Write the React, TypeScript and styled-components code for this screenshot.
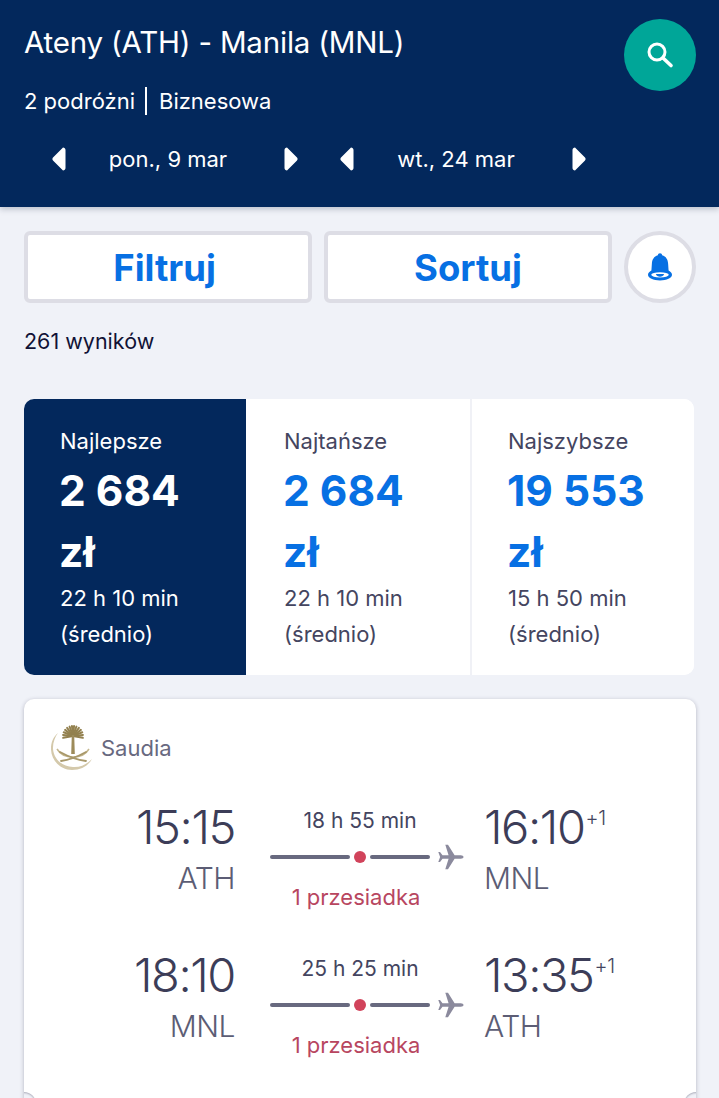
import React from 'react';
import styled, { createGlobalStyle } from 'styled-components';

const GlobalStyle = createGlobalStyle`
  html, body {
    margin: 0;
    padding: 0;
    background: #f0f2f8;
  }
  #root {
    height: 1098px;
    overflow: hidden;
  }
  * {
    box-sizing: border-box;
  }
`;

const Page = styled.div`
  width: 719px;
  font-family: Inter, 'Noto Sans', sans-serif;
  color: #161616;
`;

const Header = styled.header`
  height: 207px;
  background: #03285c;
  color: #fff;
  padding: 19px 23px 0 24px;
  box-shadow: 0 2px 6px rgba(20, 30, 60, 0.25);
  position: relative;
`;

const HeaderTop = styled.div`
  display: flex;
  justify-content: space-between;
  align-items: flex-start;
`;

const Route = styled.div`
  font-size: 29.5px;
  line-height: 46px;
  letter-spacing: -0.2px;
`;

const Meta = styled.div`
  display: flex;
  align-items: center;
  font-size: 22px;
  margin-top: 22px;
`;

const MetaPart = styled.span<{ $first?: boolean }>`
  line-height: 28px;
  padding-right: ${(p) => (p.$first ? '10px' : '0')};
  margin-right: ${(p) => (p.$first ? '12px' : '0')};
  border-right: ${(p) => (p.$first ? '2px solid #fff' : 'none')};
`;

const SearchButton = styled.div`
  width: 72px;
  height: 72px;
  border-radius: 50%;
  background: #00a698;
  display: flex;
  align-items: center;
  justify-content: center;
`;

const DateRow = styled.div`
  display: flex;
  margin-top: 30px;
  padding-left: 28px;
  gap: 42px;
`;

const DatePicker = styled.div`
  width: 246px;
  display: flex;
  align-items: center;
  justify-content: space-between;
`;

const DateLabel = styled.span`
  font-size: 22px;
  line-height: 28px;
  padding-right: 14px;
`;

const Content = styled.main`
  padding: 24px 23px 0 24px;
`;

const Actions = styled.div`
  display: flex;
  gap: 12px;
`;

const ActionButton = styled.div<{ $nudge?: number }>`
  width: 288px;
  height: 72px;
  background: #fff;
  border: 4px solid #dddde5;
  border-radius: 6px;
  color: #0770e3;
  font-size: 36.5px;
  font-weight: 700;
  padding: 1px ${(p) => p.$nudge ?? 0}px 0 0;
  display: flex;
  align-items: center;
  justify-content: center;
`;

const BellButton = styled.div`
  width: 72px;
  height: 72px;
  background: #fff;
  border: 4px solid #dddde5;
  border-radius: 50%;
  display: flex;
  align-items: center;
  justify-content: center;
`;

const Results = styled.div`
  font-size: 21.5px;
  line-height: 28px;
  margin-top: 24px;
  color: #111236;
`;

const Tabs = styled.div`
  display: grid;
  grid-template-columns: 222px 224px 224px;
  width: 670px;
  height: 276px;
  margin-top: 44px;
  background: #fff;
  border-radius: 10px;
  overflow: hidden;
`;

const Tab = styled.div<{ $active?: boolean; $divider?: boolean }>`
  padding: 25px 0 0 ${(p) => (p.$active ? '36px' : p.$divider ? '36px' : '38px')};
  background: ${(p) => (p.$active ? '#03285c' : '#fff')};
  color: ${(p) => (p.$active ? '#fff' : '#444560')};
  border-left: ${(p) => (p.$divider ? '2px solid #f0f1f6' : 'none')};
`;

const TabTitle = styled.div`
  font-size: 22px;
  line-height: 34px;
`;

const TabPrice = styled.div<{ $active?: boolean }>`
  font-size: 42.5px;
  font-weight: 700;
  line-height: 61px;
  margin-left: -1px;
  color: ${(p) => (p.$active ? '#fff' : '#0770e3')};
  margin-top: 2px;
`;

const TabTime = styled.div`
  font-size: 22px;
  line-height: 36px;
  margin-top: -2px;
`;

const Card = styled.section`
  position: relative;
  width: 672px;
  height: 440px;
  margin-top: 24px;
  background: #fff;
  border-radius: 10px;
  box-shadow: 0 1px 4px rgba(40, 40, 70, 0.3);
  padding: 26px 0 0 26px;
  overflow: hidden;
`;

const Notch = styled.span<{ $side: 'left' | 'right' }>`
  position: absolute;
  top: 393px;
  ${(p) => p.$side}: -12px;
  width: 24px;
  height: 24px;
  border-radius: 50%;
  background: #f0f2f8;
  box-shadow: inset 0 1px 2px rgba(40, 40, 70, 0.35);
`;

const Airline = styled.div`
  display: flex;
  align-items: center;
  gap: 7px;
  font-size: 22px;
  color: #68697f;
`;

const LegList = styled.div`
  display: flex;
  flex-direction: column;
  gap: 36px;
  margin-top: 28px;
`;

const Leg = styled.div`
  display: grid;
  grid-template-columns: 185px 179px auto;
  column-gap: 35px;
`;

const Times = styled.div<{ $left?: boolean }>`
  text-align: ${(p) => (p.$left ? 'right' : 'left')};
`;

const Clock = styled.div`
  font-size: 47px;
  font-weight: 300;
  line-height: 56px;
  letter-spacing: -1.4px;
  color: #3c3d58;
  white-space: nowrap;
`;

const NextDay = styled.sup`
  font-size: 20px;
  font-weight: 300;
  line-height: 0;
  vertical-align: 19px;
  margin-left: 1px;
  letter-spacing: -0.5px;
  color: #444560;
`;

const Code = styled.div`
  font-size: 30px;
  font-weight: 300;
  line-height: 40px;
  letter-spacing: -0.5px;
  margin-top: 3px;
  color: #5c5d75;
`;

const Middle = styled.div`
  display: flex;
  flex-direction: column;
  padding-top: 8px;
`;

const Duration = styled.div`
  width: 180px;
  text-align: center;
  font-size: 21px;
  line-height: 28px;
  color: #444560;
`;

const Track = styled.div`
  display: flex;
  align-items: center;
  height: 28px;
  margin-top: 8px;
  gap: 4px;
  width: 194px;
`;

const Line = styled.span<{ $width: number }>`
  width: ${(p) => p.$width}px;
  height: 4px;
  background: #68697f;
  border-radius: 2px;
`;

const Dot = styled.span`
  width: 12px;
  height: 12px;
  border-radius: 50%;
  background: #d1435b;
`;

const PlaneSlot = styled.span`
  display: flex;
  margin-left: 4px;
`;

const Stops = styled.div`
  width: 172px;
  text-align: center;
  font-size: 22px;
  line-height: 28px;
  margin-top: 12px;
  color: #b8465f;
`;

const SearchIcon = () => (
  <svg width="30" height="30" viewBox="0 0 30 30" fill="none" stroke="#fff" strokeLinecap="round">
    <circle cx="12" cy="12" r="8" strokeWidth="3" />
    <path d="M18 18l8 7.5" strokeWidth="3.6" />
  </svg>
);

const Chevron = ({ flip }: { flip?: boolean }) => (
  <svg width="14" height="24" viewBox="0 0 14 24" style={flip ? { transform: 'scaleX(-1)' } : undefined}>
    <path d="M11 .5c1.400 0 2.500 1 2.500 2.500v18c0 1.500-1.100 2.500-2.500 2.500L1 13.400c-.8-.8-.8-2 0-2.800z" fill="#fff" />
  </svg>
);

const BellIcon = () => (
  <svg width="24" height="28" viewBox="0 0 26 30" fill="#0770e3">
    <path d="M13 0c1.400 0 2.200 1 2.300 2.300C19.600 3.600 21.600 7 21.800 11.500l.5 7.300C24.600 20 26 21.500 26 23.500c0 3.500-5.800 6-13 6S0 27 0 23.500c0-2 1.400-3.500 3.700-4.700l.5-7.300C4.400 7 6.400 3.600 10.700 2.300 10.800 1 11.600 0 13 0z" />
    <ellipse cx="13" cy="23.500" rx="9.500" ry="2.800" fill="#fff" />
    <path d="M8.500 22.500h9c-.6 2-2.400 3-4.500 3s-3.900-1-4.500-3z" />
  </svg>
);

const PlaneIcon = () => (
  <svg width="26" height="26" viewBox="0 0 26 26" fill="#8b8a9d">
    <path d="M25.500 13c0-.9-1.200-1.700-2.700-1.700h-6.200L10 .8H7.300l3.300 10.500H4.500L2 8H.3l1.800 5-1.800 5H2l2.500-3.300h6.100L7.300 25.200H10l6.600-10.500h6.200c1.500 0 2.700-.8 2.700-1.700z" />
  </svg>
);

const palmFronds = [-100, -84, -68, -52, -36, -20, -6, 6, 20, 36, 52, 68, 84, 100];

const SaudiaLogo = () => (
  <svg width="44" height="46" viewBox="0 0 44 46" fill="none">
    <path
      d="M8 8C3 12 .8 18 1 24.500 1.500 36 11 45 22 45c9 0 16-4 20-11-5 5-11 8.500-19 8C12 41.500 3.500 34 3 23.500 2.800 17.500 5 12 8 8z"
      fill="#d4c9ab"
    />
    <g stroke="#93814f" strokeWidth="2" strokeLinecap="round">
      {palmFronds.map((angle) => (
        <path key={angle} d="M23 11V1" transform={`rotate(${angle} 23 11)`} />
      ))}
    </g>
    <path d="M21.800 10h2.400l.6 19h-3.600z" fill="#9d8b5a" />
    <path d="M7 24c3 5 9 8 16 8s13-3 16-8" stroke="#c4b78f" strokeWidth="1.500" />
    <path d="M11 36c8-1 16-4 25-9M36 36c-8-1-17-4-26-9" stroke="#a8986a" strokeWidth="1.800" strokeLinecap="round" />
  </svg>
);

interface LegData {
  depart: string;
  from: string;
  duration: string;
  arrive: string;
  to: string;
}

const legs: LegData[] = [
  { depart: '15:15', from: 'ATH', duration: '18 h 55 min', arrive: '16:10', to: 'MNL' },
  { depart: '18:10', from: 'MNL', duration: '25 h 25 min', arrive: '13:35', to: 'ATH' },
];

const tabs = [
  { title: 'Najlepsze', price: '2 684', time: '22 h 10 min', active: true },
  { title: 'Najtańsze', price: '2 684', time: '22 h 10 min' },
  { title: 'Najszybsze', price: '19 553', time: '15 h 50 min', divider: true },
];

export default function App() {
  return (
    <Page>
      <GlobalStyle />
      <Header>
        <HeaderTop>
          <div>
            <Route>Ateny (ATH) - Manila (MNL)</Route>
            <Meta>
              <MetaPart $first>2 podróżni</MetaPart>
              <MetaPart>Biznesowa</MetaPart>
            </Meta>
          </div>
          <SearchButton>
            <SearchIcon />
          </SearchButton>
        </HeaderTop>
        <DateRow>
          <DatePicker>
            <Chevron />
            <DateLabel>pon., 9 mar</DateLabel>
            <Chevron flip />
          </DatePicker>
          <DatePicker>
            <Chevron />
            <DateLabel>wt., 24 mar</DateLabel>
            <Chevron flip />
          </DatePicker>
        </DateRow>
      </Header>
      <Content>
        <Actions>
          <ActionButton $nudge={7}>Filtruj</ActionButton>
          <ActionButton>Sortuj</ActionButton>
          <BellButton>
            <BellIcon />
          </BellButton>
        </Actions>
        <Results>261 wyników</Results>
        <Tabs>
          {tabs.map((tab) => (
            <Tab key={tab.title} $active={tab.active} $divider={tab.divider}>
              <TabTitle>{tab.title}</TabTitle>
              <TabPrice $active={tab.active}>
                {tab.price}
                <br />
                zł
              </TabPrice>
              <TabTime>
                {tab.time}
                <br />
                (średnio)
              </TabTime>
            </Tab>
          ))}
        </Tabs>
        <Card>
          <Notch $side="left" />
          <Notch $side="right" />
          <Airline>
            <SaudiaLogo />
            Saudia
          </Airline>
          <LegList>
            {legs.map((leg) => (
              <Leg key={leg.depart}>
                <Times $left>
                  <Clock>{leg.depart}</Clock>
                  <Code>{leg.from}</Code>
                </Times>
                <Middle>
                  <Duration>{leg.duration}</Duration>
                  <Track>
                    <Line $width={80} />
                    <Dot />
                    <Line $width={60} />
                    <PlaneSlot>
                      <PlaneIcon />
                    </PlaneSlot>
                  </Track>
                  <Stops>1 przesiadka</Stops>
                </Middle>
                <Times>
                  <Clock>
                    {leg.arrive}
                    <NextDay>+1</NextDay>
                  </Clock>
                  <Code>{leg.to}</Code>
                </Times>
              </Leg>
            ))}
          </LegList>
        </Card>
      </Content>
    </Page>
  );
}
